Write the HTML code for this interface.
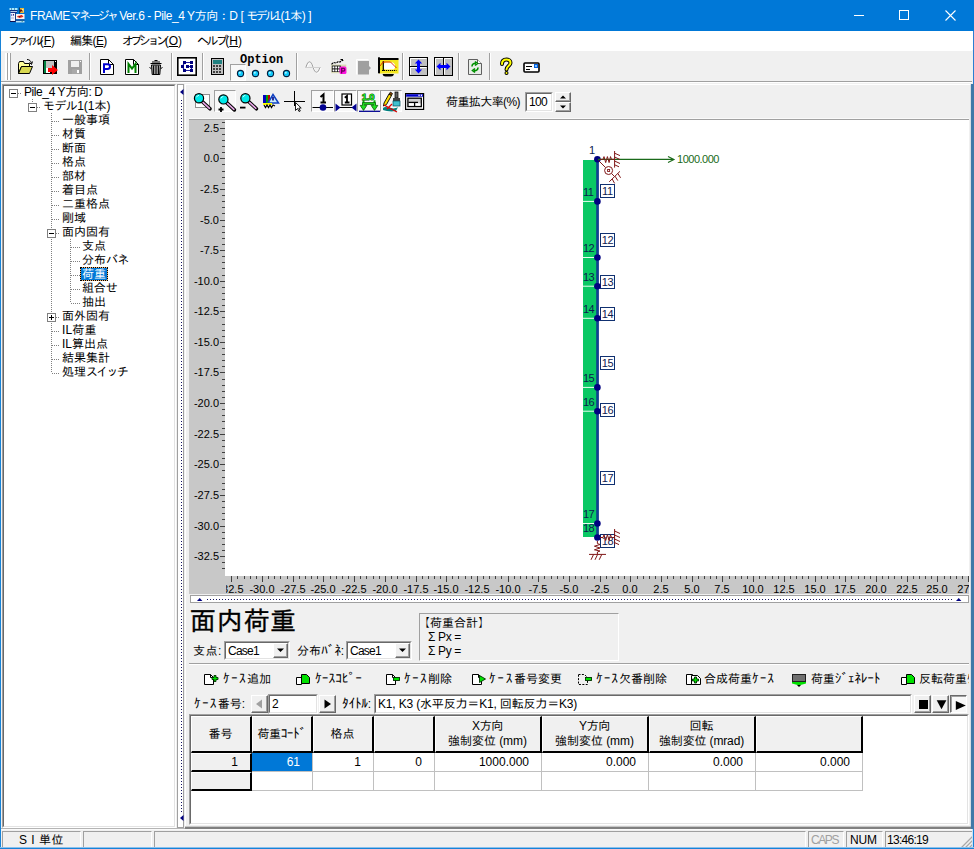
<!DOCTYPE html>
<html lang="ja"><head><meta charset="utf-8"><title>FRAMEマネージャ Ver.6</title>
<style>
html,body{margin:0;padding:0}
body{width:974px;height:849px;position:relative;overflow:hidden;background:#f0f0f0;
 font-family:"Liberation Sans","IPAGothic",sans-serif;font-size:12px;color:#000;line-height:1}
.a{position:absolute}
.t{position:absolute;white-space:nowrap;line-height:14px;height:14px}
svg{position:absolute;overflow:visible}
.sunk{position:absolute;box-sizing:border-box;border:1px solid;border-color:#a0a0a0 #fff #fff #a0a0a0}
.sunk2{position:absolute;box-sizing:border-box;border:1px solid;border-color:#696969 #e3e3e3 #e3e3e3 #696969}
.btn{position:absolute;box-sizing:border-box;background:#f0f0f0;border:1px solid;border-color:#fff #696969 #696969 #fff;box-shadow:inset -1px -1px 0 #a0a0a0}
.vsep{position:absolute;width:1px;background:#a0a0a0;box-shadow:1px 0 0 #fff}
.rl{position:absolute;font-size:11px;line-height:12px;height:12px;color:#000;white-space:nowrap}
.tree .t{font-size:12px}
.h{font-size:13.5px;line-height:12px}
.gh{position:absolute;box-sizing:border-box;background:#f0f0f0;border-right:2px solid #000;border-bottom:2px solid #000;border-top:1px solid #fff;border-left:1px solid #fff;text-align:center;font-size:12px;line-height:16px}
.gc{position:absolute;box-sizing:border-box;background:#fff;border-right:1px solid #c0c0c0;border-bottom:1px solid #c0c0c0;text-align:right;font-size:12px;line-height:18px;padding-right:12px}
</style></head><body>

<div class="a" style="left:0;top:0;width:974px;height:31px;background:#0078d7"></div>
<svg style="left:9px;top:7px" width="17" height="16" viewBox="0 0 17 16">
<rect x="0.5" y="1" width="8" height="2" fill="#a8ecff"></rect><rect x="2" y="1.5" width="1" height="1" fill="#104080"></rect><rect x="5" y="1.5" width="1" height="1" fill="#104080"></rect>
<rect x="1" y="3.3" width="7.5" height="1" fill="#101060"></rect><rect x="1.5" y="4.3" width="6.5" height="0.8" fill="#fff"></rect><rect x="1.5" y="5.1" width="6.5" height="0.8" fill="#202070"></rect>
<rect x="1.5" y="6" width="4.5" height="8" fill="#f4f4fc"></rect><rect x="2.2" y="7" width="1" height="2" fill="#6060c0"></rect><rect x="4" y="7" width="1" height="1.6" fill="#303080"></rect><rect x="2" y="10" width="3" height="2" fill="#d0d0e8"></rect>
<rect x="1" y="14" width="5.5" height="1" fill="#101050"></rect><rect x="6" y="6" width="0.8" height="9" fill="#203070"></rect>
<rect x="11" y="1" width="4" height="5" fill="#e8b838"></rect><rect x="12.5" y="2" width="2" height="3" fill="#fff0a0"></rect><path d="M10.5 5.5 L12 3 L13.5 4.5" stroke="#601000" stroke-width="1.2" fill="none"></path><rect x="10" y="0.5" width="1" height="6" fill="#104060"></rect>
<rect x="7" y="7" width="8.5" height="5.2" fill="#fff4f0"></rect><path d="M8 10 C9 7.5 10 9.5 11 8.5 C12 7.5 13.5 8 14.5 9.5 C13 11 9.5 11 8 10Z" fill="#e03020"></path><rect x="10" y="9" width="1.5" height="1.5" fill="#901010"></rect>
<rect x="7" y="12.2" width="8.5" height="1.8" fill="#1a5aa8"></rect><rect x="7" y="14" width="8.5" height="1.5" fill="#b8e0f4"></rect><rect x="12.5" y="13.6" width="1.5" height="1" fill="#208080"></rect>
</svg>
<div class="t" style="left: 30px; top: 8px; color: rgb(255, 255, 255); font-size: 12px; line-height: 16px; height: 16px; letter-spacing: -0.44px;">FRAME<span class="k" style="letter-spacing: -2.7px;">マネージャ</span> Ver.6 - Pile_4 Y方向：D [ <span class="k" style="letter-spacing: -2.7px;">モデル</span>1(1本) ]</div>
<svg style="left:840px;top:0" width="134" height="31" viewBox="0 0 134 31">
<rect x="14" y="15" width="10" height="1" fill="#fff"></rect>
<rect x="59.5" y="10.5" width="9" height="9" fill="none" stroke="#fff" stroke-width="1"></rect>
<path d="M105.5 10.5 L115.5 20.5 M115.5 10.5 L105.5 20.5" stroke="#fff" stroke-width="1.1" fill="none"></path>
</svg>
<div class="a" style="left:1px;top:31px;width:972px;height:19px;background:#fff"></div>
<div class="t" style="left:8px;top:34px"><span class="k" style="letter-spacing: -4.09px;">ファイル</span>(<u>F</u>)</div>
<div class="t" style="left: 70px; top: 34px; letter-spacing: -0.7px;">編集(<u>E</u>)</div>
<div class="t" style="left:122px;top:34px"><span class="k" style="letter-spacing: -3.47px;">オプション</span>(<u>O</u>)</div>
<div class="t" style="left:197px;top:34px"><span class="k" style="letter-spacing: -2.56px;">ヘルプ</span>(<u>H</u>)</div>
<div class="a" style="left:1px;top:50px;width:971px;height:1px;background:#fff"></div>
<div class="a" style="left:1px;top:81px;width:971px;height:1px;background:#a0a0a0"></div>
<div class="a" style="left:1px;top:82px;width:971px;height:1px;background:#fff"></div>
<div class="a" style="left:5px;top:53px;width:2px;height:27px;background:#fff;box-shadow:2px 0 0 -0px #a0a0a0"></div><div class="a" style="left:7px;top:53px;width:1px;height:27px;background:#a0a0a0"></div><div class="a" style="left:8px;top:53px;width:2px;height:27px;background:#fff"></div><div class="a" style="left:10px;top:53px;width:1px;height:27px;background:#a0a0a0"></div>
<div class="vsep" style="left:89px;top:53px;height:27px"></div>
<div class="vsep" style="left:171px;top:53px;height:27px"></div>
<div class="vsep" style="left:202px;top:53px;height:27px"></div>
<div class="vsep" style="left:296px;top:53px;height:27px"></div>
<div class="vsep" style="left:402px;top:53px;height:27px"></div>
<div class="vsep" style="left:458px;top:53px;height:27px"></div>
<div class="vsep" style="left:489px;top:53px;height:27px"></div>
<svg style="left:17px;top:58px" width="17" height="17" viewBox="0 0 17 17"><path d="M1.5 5.5 L2.5 3.5 H6.5 L7.5 5.5 H12.5 V8.5 H4.5 L1.5 15.5 Z" fill="#ffff99" stroke="#000"></path><path d="M4.5 8.5 H15.5 L12.5 15.5 H1.5 Z" fill="#d8d850" stroke="#000"></path><path d="M10 1.5 C12.5 1.5 14 3 14.5 5.5 M12.5 4.5 L14.5 6.5 L15.5 3.5" fill="none" stroke="#000"></path></svg>
<svg style="left:43px;top:60px" width="16" height="15" viewBox="0 0 16 15"><rect x="0" y="0" width="14" height="14" fill="#000"></rect><rect x="1" y="1" width="2" height="12" fill="#008040"></rect><rect x="3" y="1" width="8" height="7" fill="#c0c0c0"></rect><rect x="12" y="1" width="1" height="1" fill="#fff"></rect><rect x="3" y="8" width="4" height="5" fill="#fff"></rect><path d="M5 8 H9 V5 L15 10 L9 15 V12 H5 Z" fill="#ff0000"></path></svg>
<svg style="left:68px;top:60px" width="15" height="15" viewBox="0 0 15 15" shape-rendering="crispEdges"><rect x="0" y="0" width="14" height="14" fill="#a0a0a0"></rect><rect x="3" y="1" width="8" height="6" fill="#f0f0f0"></rect><rect x="12" y="1" width="1" height="1" fill="#fff"></rect><rect x="4" y="9" width="7" height="5" fill="#a8a8a8"></rect><rect x="9" y="10" width="2" height="3" fill="#fff"></rect></svg>
<svg style="left:100px;top:59px" width="14" height="17" viewBox="0 0 14 17"><path d="M0.5 0.5 H8.5 L13.5 5.5 V15.5 H0.5 Z" fill="#fff" stroke="#000"></path><path d="M8.5 0.5 V5.5 H13.5" fill="none" stroke="#000"></path><path d="M4 14 V5.2 H7.5 Q10 5.2 10 7.6 Q10 10 7.5 10 H4" fill="none" stroke="#0000d0" stroke-width="2"></path></svg>
<svg style="left:125px;top:59px" width="14" height="17" viewBox="0 0 14 17"><path d="M0.5 0.5 H8.5 L13.5 5.5 V15.5 H0.5 Z" fill="#fff" stroke="#000"></path><path d="M8.5 0.5 V5.5 H13.5" fill="none" stroke="#000"></path><path d="M3.5 14 V5 L7 9.5 L10.5 5 V14" fill="none" stroke="#008000" stroke-width="2"></path></svg>
<svg style="left:149px;top:59px" width="14" height="17" viewBox="0 0 14 17"><path d="M5.5 1.5 H8.5 M3 3 H11 M1.5 4.5 H12.5" stroke="#000" stroke-width="1.2" fill="none"></path><path d="M2.5 6 H11.5 L10.8 15.5 H3.2 Z" fill="#b0b0b0" stroke="#000"></path><path d="M4.6 6.5 V15 M7 6.5 V15 M9.4 6.5 V15" stroke="#000" stroke-width="1.1" fill="none"></path><path d="M0.5 8.5 L2.3 9.6 M13.5 8.5 L11.7 9.6" stroke="#000"></path></svg>
<svg style="left:177px;top:57px" width="20" height="19" viewBox="0 0 20 19"><rect x="0.8" y="0.8" width="18.4" height="17.4" fill="#fff" stroke="#000" stroke-width="1.6"></rect><path d="M14.5 5.5 H7.5 L5.5 9.5 L7.5 13.5 H14.5 V9.5 H10.5" fill="none" stroke="#2020a0" stroke-width="1.2"></path><g fill="#000080"><rect x="6" y="4" width="3" height="3"></rect><rect x="13" y="4" width="3" height="3"></rect><rect x="4" y="8" width="3" height="3"></rect><rect x="6" y="12" width="3" height="3"></rect><rect x="13" y="12" width="3" height="3"></rect><rect x="13" y="8" width="3" height="3"></rect><rect x="9" y="8" width="3" height="3"></rect></g></svg>
<svg style="left:211px;top:58px" width="14" height="18" viewBox="0 0 14 18" shape-rendering="crispEdges"><rect x="0.5" y="0.5" width="12" height="16" fill="#c0c0c0" stroke="#000"></rect><rect x="2" y="2" width="9" height="4" fill="#208080"></rect><g fill="#404040"><rect x="2" y="7" width="2" height="2"></rect><rect x="5" y="7" width="2" height="2"></rect><rect x="8" y="7" width="2" height="2"></rect><rect x="2" y="10" width="2" height="2"></rect><rect x="5" y="10" width="2" height="2"></rect><rect x="8" y="10" width="2" height="2"></rect><rect x="2" y="13" width="2" height="2"></rect><rect x="5" y="13" width="2" height="2"></rect><rect x="8" y="13" width="2" height="2"></rect></g></svg>
<div class="t" style="left:240px;top:53px;font-family:'Liberation Mono',monospace;font-weight:bold;font-size:12px;letter-spacing:0">Option</div>
<div class="a" style="left:230px;top:64px;width:16px;height:17px;box-sizing:border-box;border:1px solid;border-color:#a0a0a0 #fff #fff #a0a0a0;background:#f8f8f8"></div>
<svg style="left:236px;top:69px" width="9" height="9" viewBox="0 0 9 9"><circle cx="4.5" cy="4.5" r="3.1" fill="#10c8f8" stroke="#002040" stroke-width="1.1"></circle><circle cx="3.8" cy="3.8" r="1" fill="#b0f4ff"></circle></svg>
<svg style="left:251px;top:69px" width="9" height="9" viewBox="0 0 9 9"><circle cx="4.5" cy="4.5" r="3.1" fill="#10c8f8" stroke="#002040" stroke-width="1.1"></circle><circle cx="3.8" cy="3.8" r="1" fill="#b0f4ff"></circle></svg>
<svg style="left:266px;top:69px" width="9" height="9" viewBox="0 0 9 9"><circle cx="4.5" cy="4.5" r="3.1" fill="#10c8f8" stroke="#002040" stroke-width="1.1"></circle><circle cx="3.8" cy="3.8" r="1" fill="#b0f4ff"></circle></svg>
<svg style="left:282px;top:69px" width="9" height="9" viewBox="0 0 9 9"><circle cx="4.5" cy="4.5" r="3.1" fill="#10c8f8" stroke="#002040" stroke-width="1.1"></circle><circle cx="3.8" cy="3.8" r="1" fill="#b0f4ff"></circle></svg>
<svg style="left:305px;top:60px" width="16" height="13" viewBox="0 0 16 13"><path d="M1 7 C3 0 6 0 8 7 C10 14 13 14 15 7" fill="none" stroke="#fff" stroke-width="1" transform="translate(1,1)"></path><path d="M1 7 C3 0 6 0 8 7 C10 14 13 14 15 7" fill="none" stroke="#a0a0a0" stroke-width="1"></path><path d="M0 7.5 H16" stroke="#d0d0d0"></path></svg>
<svg style="left:331px;top:59px" width="16" height="16" viewBox="0 0 16 16"><path d="M0.5 5.5 L2.5 3.5 L5 4 L7.5 2.5 L9 3 L11 1 L12.5 2" stroke="#000" stroke-width="1.2" fill="none" stroke-dasharray="2.2 0.8"></path><path d="M9.5 0.5 H12" stroke="#000"></path><rect x="0.3" y="5.6" width="15" height="8.6" fill="#d8d8b4"></rect><rect x="0.8" y="6.6" width="9" height="6.4" fill="#101010"></rect><g fill="#fff"><rect x="1.6" y="7.4" width="1.8" height="2"></rect><rect x="4.2" y="7.4" width="1.8" height="2"></rect><rect x="6.8" y="7.4" width="1.8" height="2"></rect><rect x="1.6" y="10.4" width="1.8" height="2"></rect><rect x="4.2" y="10.4" width="1.8" height="2"></rect><rect x="6.8" y="10.4" width="1.8" height="2"></rect></g><rect x="8.6" y="7.6" width="6.8" height="7.4" rx="1.5" fill="#ff10e0"></rect><path d="M10.6 14.4 V9.4 H12.6 Q13.8 9.4 13.8 10.7 Q13.8 12 12.6 12 H10.6" fill="none" stroke="#700060" stroke-width="1.3"></path></svg>
<svg style="left:356px;top:59px" width="16" height="16" viewBox="0 0 16 16"><path d="M0.5 15.5 V0.5 H12.5" fill="none" stroke="#fff" stroke-width="1"></path><path d="M2 2 H13 V7 L15 9 L13 11 V15.5 H2 Z" fill="#a0a0a0"></path></svg>
<svg style="left:377px;top:57px" width="22" height="20" viewBox="0 0 22 20"><rect x="2" y="2" width="19.5" height="14.5" fill="#f4e820"></rect><rect x="1" y="1" width="20.5" height="2" fill="#000"></rect><rect x="1" y="0.3" width="2" height="16" fill="#000"></rect><path d="M7 6.5 L8.5 5.5 H16 L18 7.5 V11 L16.5 12.5 H8 L7 11.5 Z" fill="#fff"></path><path d="M6.3 4 V14" stroke="#000" stroke-width="1.2"></path><path d="M5 13.5 H19.5" stroke="#000" stroke-width="1.2" stroke-dasharray="1.2 0.8"></path><path d="M3 9 L6 5 H13.5 L19.5 11" fill="none" stroke="#e02000" stroke-width="0.9"></path><path d="M5.5 17 H17 Q16.5 19.5 14 19.5 H8.5 Q6 19.5 5.5 17 Z" fill="#000"></path></svg>
<svg style="left:409px;top:57px" width="19" height="19" viewBox="0 0 19 19"><rect x="0.5" y="0.5" width="18" height="18" fill="#c0c0c0" stroke="#000" stroke-width="1"></rect><path d="M1.5 9 V1.5 H17.5 M1.5 17.5 V10.5 H17.5" stroke="#fff" stroke-width="1" fill="none"></path><rect x="1" y="9" width="17" height="1" fill="#000"></rect><path d="M9.5 2.5 L13.2 6.5 H11 V12.5 H13.2 L9.5 16.5 L5.8 12.5 H8 V6.5 H5.8 Z" fill="#0000ff"></path></svg>
<svg style="left:434px;top:57px" width="19" height="19" viewBox="0 0 19 19"><rect x="0.5" y="0.5" width="18" height="18" fill="#c0c0c0" stroke="#000" stroke-width="1"></rect><path d="M1.5 17.5 V1.5 H9 M10.5 17.5 V1.5 H17.5" stroke="#fff" stroke-width="1" fill="none"></path><rect x="9" y="1" width="1" height="17" fill="#000"></rect><path d="M2.5 9.5 L6.5 5.8 V8 H12.5 V5.8 L16.5 9.5 L12.5 13.2 V11 H6.5 V13.2 Z" fill="#0000ff"></path></svg>
<svg style="left:468px;top:59px" width="14" height="16" viewBox="0 0 14 16"><path d="M0.5 0.5 H9.5 L13.5 4.5 V15.5 H0.5 Z" fill="#e8ece8" stroke="#606060"></path><path d="M9.5 0.5 V4.5 H13.5" fill="#fff" stroke="#606060"></path><path d="M4 7.5 C4 5 6 4 8 4.5 M7 2.5 L9.5 4.5 L7 6.5" fill="none" stroke="#009000" stroke-width="1.6"></path><path d="M10 8.5 C10 11 8 12 6 11.5 M7 9.5 L4.5 11.5 L7 13.5" fill="none" stroke="#009000" stroke-width="1.6"></path></svg>
<svg style="left:499px;top:58px" width="14" height="18" viewBox="0 0 14 18"><path d="M3 6 C3 2 6 1.5 7.5 1.5 C10 1.5 11.5 3 11.5 5 C11.5 7.5 7.5 8 7.5 11.5" fill="none" stroke="#000" stroke-width="4" stroke-linecap="round"></path><circle cx="7.5" cy="15" r="2" fill="#000"></circle><path d="M3 6 C3 2 6 1.5 7.5 1.5 C10 1.5 11.5 3 11.5 5 C11.5 7.5 7.5 8 7.5 11.5" fill="none" stroke="#ffff00" stroke-width="2" stroke-linecap="round"></path><circle cx="7.5" cy="15" r="1" fill="#ffff00"></circle></svg>
<svg style="left:523px;top:62px" width="17" height="12" viewBox="0 0 17 12"><rect x="1" y="1" width="15" height="9" rx="1" fill="#fff" stroke="#000" stroke-width="1.6"></rect><path d="M3 4.5 H9 M3 7.5 H7" stroke="#000" stroke-width="1.2"></path><rect x="11" y="2" width="4" height="4" fill="#0060e0"></rect><rect x="12" y="3" width="2" height="2" fill="#80c0ff"></rect></svg>
<div class="sunk" style="left:2px;top:84px;width:174px;height:744px"></div>
<div class="sunk2" style="left:3px;top:85px;width:172px;height:742px;background:#fff"></div>
<div class="tree">
<div class="a" style="left:32px;top:99px;width:1px;height:4px;background-image:repeating-linear-gradient(180deg,#808080 0 1px,transparent 1px 2px)"></div>
<div class="a" style="left:51px;top:113px;width:1px;height:260px;background-image:repeating-linear-gradient(180deg,#808080 0 1px,transparent 1px 2px)"></div>
<div class="a" style="left:70px;top:239px;width:1px;height:64px;background-image:repeating-linear-gradient(180deg,#808080 0 1px,transparent 1px 2px)"></div>
<div class="a" style="left:18px;top:93px;width:4px;height:1px;background-image:repeating-linear-gradient(90deg,#808080 0 1px,transparent 1px 2px)"></div>
<div class="a" style="left:9px;top:89px;width:9px;height:9px;box-sizing:border-box;border:1px solid #808080;background:#fff"></div>
<div class="a" style="left:11px;top:93px;width:5px;height:1px;background:#000"></div>
<div class="t" style="left: 24px; top: 85px; letter-spacing: -0.41px;">Pile_4 Y方向: D</div>
<div class="a" style="left:37px;top:107px;width:4px;height:1px;background-image:repeating-linear-gradient(90deg,#808080 0 1px,transparent 1px 2px)"></div>
<div class="a" style="left:28px;top:103px;width:9px;height:9px;box-sizing:border-box;border:1px solid #808080;background:#fff"></div>
<div class="a" style="left:30px;top:107px;width:5px;height:1px;background:#000"></div>
<div class="t" style="left:43px;top:99px"><span class="k" style="letter-spacing: -0.61px;">モデル</span>1(1本)</div>
<div class="a" style="left:52px;top:121px;width:8px;height:1px;background-image:repeating-linear-gradient(90deg,#808080 0 1px,transparent 1px 2px)"></div>
<div class="t" style="left:62px;top:113px">一般事項</div>
<div class="a" style="left:52px;top:135px;width:8px;height:1px;background-image:repeating-linear-gradient(90deg,#808080 0 1px,transparent 1px 2px)"></div>
<div class="t" style="left:62px;top:127px">材質</div>
<div class="a" style="left:52px;top:149px;width:8px;height:1px;background-image:repeating-linear-gradient(90deg,#808080 0 1px,transparent 1px 2px)"></div>
<div class="t" style="left:62px;top:141px">断面</div>
<div class="a" style="left:52px;top:163px;width:8px;height:1px;background-image:repeating-linear-gradient(90deg,#808080 0 1px,transparent 1px 2px)"></div>
<div class="t" style="left:62px;top:155px">格点</div>
<div class="a" style="left:52px;top:177px;width:8px;height:1px;background-image:repeating-linear-gradient(90deg,#808080 0 1px,transparent 1px 2px)"></div>
<div class="t" style="left:62px;top:169px">部材</div>
<div class="a" style="left:52px;top:191px;width:8px;height:1px;background-image:repeating-linear-gradient(90deg,#808080 0 1px,transparent 1px 2px)"></div>
<div class="t" style="left:62px;top:183px">着目点</div>
<div class="a" style="left:52px;top:205px;width:8px;height:1px;background-image:repeating-linear-gradient(90deg,#808080 0 1px,transparent 1px 2px)"></div>
<div class="t" style="left:62px;top:197px">二重格点</div>
<div class="a" style="left:52px;top:219px;width:8px;height:1px;background-image:repeating-linear-gradient(90deg,#808080 0 1px,transparent 1px 2px)"></div>
<div class="t" style="left:62px;top:211px">剛域</div>
<div class="a" style="left:56px;top:233px;width:4px;height:1px;background-image:repeating-linear-gradient(90deg,#808080 0 1px,transparent 1px 2px)"></div>
<div class="a" style="left:47px;top:229px;width:9px;height:9px;box-sizing:border-box;border:1px solid #808080;background:#fff"></div>
<div class="a" style="left:49px;top:233px;width:5px;height:1px;background:#000"></div>
<div class="t" style="left:62px;top:225px">面内固有</div>
<div class="a" style="left:71px;top:247px;width:9px;height:1px;background-image:repeating-linear-gradient(90deg,#808080 0 1px,transparent 1px 2px)"></div>
<div class="t" style="left:82px;top:239px">支点</div>
<div class="a" style="left:71px;top:261px;width:9px;height:1px;background-image:repeating-linear-gradient(90deg,#808080 0 1px,transparent 1px 2px)"></div>
<div class="t" style="left:82px;top:253px">分布<span class="k" style="letter-spacing: -0.75px;">バネ</span></div>
<div class="a" style="left:71px;top:275px;width:9px;height:1px;background-image:repeating-linear-gradient(90deg,#808080 0 1px,transparent 1px 2px)"></div>
<div class="a" style="left:80px;top:267px;width:28px;height:14px;background:#0078d7;box-shadow:inset 0 0 0 1px #f0b070;outline:1px dotted #000;outline-offset:-1px"></div>
<div class="t" style="left:82px;top:267px;color:#fff">荷重</div>
<div class="a" style="left:71px;top:289px;width:9px;height:1px;background-image:repeating-linear-gradient(90deg,#808080 0 1px,transparent 1px 2px)"></div>
<div class="t" style="left: 82px; top: 281px; letter-spacing: -0.17px;">組合せ</div>
<div class="a" style="left:71px;top:303px;width:9px;height:1px;background-image:repeating-linear-gradient(90deg,#808080 0 1px,transparent 1px 2px)"></div>
<div class="t" style="left:82px;top:295px">抽出</div>
<div class="a" style="left:56px;top:317px;width:4px;height:1px;background-image:repeating-linear-gradient(90deg,#808080 0 1px,transparent 1px 2px)"></div>
<div class="a" style="left:47px;top:313px;width:9px;height:9px;box-sizing:border-box;border:1px solid #808080;background:#fff"></div>
<div class="a" style="left:49px;top:317px;width:5px;height:1px;background:#000"></div>
<div class="a" style="left:51px;top:315px;width:1px;height:5px;background:#000"></div>
<div class="t" style="left:62px;top:309px">面外固有</div>
<div class="a" style="left:52px;top:331px;width:8px;height:1px;background-image:repeating-linear-gradient(90deg,#808080 0 1px,transparent 1px 2px)"></div>
<div class="t" style="left: 62px; top: 323px; letter-spacing: 0.15px;">IL荷重</div>
<div class="a" style="left:52px;top:345px;width:8px;height:1px;background-image:repeating-linear-gradient(90deg,#808080 0 1px,transparent 1px 2px)"></div>
<div class="t" style="left:62px;top:337px">IL算出点</div>
<div class="a" style="left:52px;top:359px;width:8px;height:1px;background-image:repeating-linear-gradient(90deg,#808080 0 1px,transparent 1px 2px)"></div>
<div class="t" style="left:62px;top:351px">結果集計</div>
<div class="a" style="left:52px;top:373px;width:8px;height:1px;background-image:repeating-linear-gradient(90deg,#808080 0 1px,transparent 1px 2px)"></div>
<div class="t" style="left:62px;top:365px">処理<span class="k" style="letter-spacing: -1.75px;">スイッチ</span></div>
</div>
<div class="a" style="left:177px;top:84px;width:7px;height:744px;box-sizing:border-box;border:1px solid #a0a0a0;background:#fff"></div>
<div class="a" style="left:181px;top:100px;width:1px;height:713px;background-image:repeating-linear-gradient(180deg,#101060 0 1px,transparent 1px 3px)"></div>
<svg style="left:179px;top:89px" width="6" height="7"><path d="M4.5 0 V6 L1 3 Z" fill="#000080"></path></svg>
<svg style="left:179px;top:815px" width="6" height="7"><path d="M4.5 0 V6 L1 3 Z" fill="#000080"></path></svg>
<div class="a" style="left:185px;top:84px;width:786px;height:1px;background:#fff"></div>
<div class="a" style="left:185px;top:84px;width:1px;height:743px;background:#fff"></div>
<div class="a" style="left:189px;top:118px;width:780px;height:1px;background:#fafafa"></div>
<div class="a" style="left:189px;top:119px;width:780px;height:1px;background:#a0a0a0"></div>
<svg style="left:193px;top:90px" width="20" height="22" viewBox="0 0 20 22"><rect x="2.5" y="4.5" width="14" height="13" fill="#fff" stroke="#909090"></rect><path d="M9.5 11.8 L17 18.8" stroke="#000" stroke-width="3.6" stroke-linecap="round"></path><path d="M10 12.3 L16.5 18.3" stroke="#e8a8e8" stroke-width="1.6" stroke-linecap="round"></path><circle cx="6" cy="8.3" r="4.6" fill="#00e8e8" stroke="#000" stroke-width="1.2"></circle><path d="M3.5 7.300000000000001 A3 3 0 0 1 6 5.300000000000001" stroke="#c0ffff" stroke-width="1" fill="none"></path></svg>
<div class="a" style="left:214px;top:90px;width:22px;height:22px;box-sizing:border-box;background:#f8f8f8;border:1px solid;border-color:#a0a0a0 #fff #fff #a0a0a0"></div>
<svg style="left:214px;top:90px" width="22" height="22" viewBox="0 0 22 22"><path d="M12.9 12.9 L20.4 19.9" stroke="#000" stroke-width="3.6" stroke-linecap="round"></path><path d="M13.4 13.4 L19.9 19.4" stroke="#e8a8e8" stroke-width="1.6" stroke-linecap="round"></path><circle cx="9.4" cy="9.4" r="4.6" fill="#00e8e8" stroke="#000" stroke-width="1.2"></circle><path d="M6.9 8.4 A3 3 0 0 1 9.4 6.4" stroke="#c0ffff" stroke-width="1" fill="none"></path><path d="M4.5 19.5 H9.5 M7 17 V22" stroke="#000" stroke-width="1.8"></path></svg>
<svg style="left:238px;top:90px" width="20" height="22" viewBox="0 0 20 22"><path d="M10.9 11.8 L18.4 18.8" stroke="#000" stroke-width="3.6" stroke-linecap="round"></path><path d="M11.4 12.3 L17.9 18.3" stroke="#e8a8e8" stroke-width="1.6" stroke-linecap="round"></path><circle cx="7.4" cy="8.3" r="4.6" fill="#00e8e8" stroke="#000" stroke-width="1.2"></circle><path d="M4.9 7.300000000000001 A3 3 0 0 1 7.4 5.300000000000001" stroke="#c0ffff" stroke-width="1" fill="none"></path><path d="M2 17.6 H7.5" stroke="#000" stroke-width="1.8"></path></svg>
<svg style="left:263px;top:94px" width="17" height="15" viewBox="0 0 17 15"><rect x="0" y="1" width="3" height="8" fill="#0000c0"></rect><rect x="3" y="1" width="2" height="8" fill="#00a000"></rect><rect x="5" y="1" width="2" height="8" fill="#c00000"></rect><path d="M5 9 L10 0.5 L15.5 9 Z" fill="#c8ecff" stroke="#1040c0" stroke-width="1.5"></path><path d="M10 3 V6.5" stroke="#000080" stroke-width="1.6"></path><rect x="0" y="9" width="9" height="2" fill="#ffff00"></rect><path d="M1 11 L2.5 13.5 L4 11 L5.5 13.5 L7 11 L8.5 13.5 L10 11 L12 12" fill="none" stroke="#000" stroke-width="1.2"></path></svg>
<svg style="left:284px;top:90px" width="22" height="22" viewBox="0 0 22 22"><path d="M0 11.5 H21 M10.5 1 V16" stroke="#000" stroke-width="1"></path><path d="M11.5 12.5 V20.5 L13.5 18.5 L15 21.5 L16.3 21 L14.8 18 H17.2 Z" fill="#fff" stroke="#000" stroke-width="0.9"></path></svg>
<div class="a" style="left:311px;top:90px;width:23px;height:22px;box-sizing:border-box;background:#f8f8f8;border:1px solid;border-color:#a0a0a0 #fff #fff #a0a0a0"></div>
<svg style="left:311px;top:90px" width="23" height="22" viewBox="0 0 23 22"><path d="M1.5 17.5 H22" stroke="#000" stroke-width="1"></path><circle cx="12" cy="17.5" r="3.3" fill="#000090"></circle><path d="M9.5 7 L12.5 4.5 V12.5 M9.5 12.5 H15" stroke="#000" stroke-width="2" fill="none"></path></svg>
<div class="a" style="left:334px;top:90px;width:23px;height:22px;box-sizing:border-box;background:#f8f8f8;border:1px solid;border-color:#a0a0a0 #fff #fff #a0a0a0"></div>
<svg style="left:334px;top:90px" width="23" height="22" viewBox="0 0 23 22"><path d="M3 17.5 H21" stroke="#000" stroke-width="1"></path><path d="M1.5 13.5 L6.5 17.5 L1.5 21.5 Z M22.5 13.5 L17.5 17.5 L22.5 21.5 Z" fill="#000090"></path><rect x="8" y="4" width="9.5" height="11" fill="#fff" stroke="#000" stroke-width="1.2"></rect><path d="M10.8 7.8 L13 6 V12.5 M10.8 12.5 H15.5" stroke="#000" stroke-width="1.8" fill="none"></path></svg>
<div class="a" style="left:357px;top:90px;width:23px;height:22px;box-sizing:border-box;background:#f8f8f8;border:1px solid;border-color:#a0a0a0 #fff #fff #a0a0a0"></div>
<svg style="left:357px;top:90px" width="23" height="22" viewBox="0 0 23 22"><path d="M2 21.3 H23" stroke="#000090" stroke-width="1.3"></path><path d="M6.5 10.3 V13 M17.5 10.3 V13" stroke="#10b010" stroke-width="2"></path><path d="M5.5 12.6 H18.5 V15.4 H20.8 L17.5 20.4 L14.2 15.4 H16.5 V14.4 H7.5 V15.4 H9.8 L6.5 20.4 L3.2 15.4 H5.5 Z" fill="#20e020" stroke="#006000" stroke-width="0.8"></path><text x="4.8" y="9.9" font-family="Liberation Sans,sans-serif" font-weight="bold" font-size="9.5" fill="#20e020" stroke="#005000" stroke-width="0.9" paint-order="stroke" letter-spacing="-0.2">1.0</text></svg>
<div class="a" style="left:380px;top:90px;width:22px;height:22px;box-sizing:border-box;background:#f8f8f8;border:1px solid;border-color:#a0a0a0 #fff #fff #a0a0a0"></div>
<svg style="left:380px;top:90px" width="22" height="22" viewBox="0 0 22 22"><path d="M4 13 L9 4 L11.5 5.5 L6.5 14.5 L3.5 16 Z" fill="#ffe000" stroke="#000" stroke-width="0.9"></path><path d="M9 4 L10.5 2 L12.5 3.5 L11.5 5.5 Z" fill="#804000" stroke="#000" stroke-width="0.7"></path><rect x="15" y="2" width="3" height="6" fill="#606060" stroke="#000" stroke-width="0.7"></rect><path d="M13 8 H20 V11 H13 Z" fill="#404040"></path><rect x="13" y="11" width="7" height="5" fill="#40c0d0" stroke="#005060" stroke-width="0.7"></rect><path d="M3 18 C7 15 12 21 18 17 L16 21 C11 22 6 21 3 20 Z" fill="#008080"></path><path d="M4 15 L17 22 M12 14 L7 19" stroke="#e00000" stroke-width="1.3"></path></svg>
<svg style="left:405px;top:93px" width="20" height="17" viewBox="0 0 20 17"><rect x="0.6" y="0.6" width="18" height="15.8" fill="#fff" stroke="#000" stroke-width="1.2"></rect><rect x="1.2" y="1.2" width="16.8" height="2.5" fill="#0000c8"></rect><rect x="13.4" y="1.6" width="1.3" height="1.5" fill="#fff"></rect><rect x="15.8" y="1.6" width="1.3" height="1.5" fill="#fff"></rect><rect x="2.9" y="5.2" width="13.4" height="8.4" fill="#d0d0d0" stroke="#000" stroke-width="1.3"></rect><path d="M3.5 9.4 H13 M9.6 9.4 V13" stroke="#000" stroke-width="1.3"></path><rect x="4" y="10.4" width="4.8" height="2.2" fill="#fff"></rect><rect x="10.6" y="10.4" width="4.8" height="2.2" fill="#fff"></rect></svg>
<div class="t" style="left: 446px; top: 95px; letter-spacing: -0.58px;">荷重拡大率(%)</div>
<div class="sunk" style="left:525px;top:92px;width:28px;height:20px"></div>
<div class="sunk2" style="left:526px;top:93px;width:26px;height:18px;background:#fff"></div>
<div class="t" style="left: 529px; top: 95px; letter-spacing: -0.68px;">100</div>
<div class="btn" style="left:555px;top:92px;width:16px;height:10px"></div>
<div class="btn" style="left:555px;top:102px;width:16px;height:10px"></div>
<svg style="left:555px;top:92px" width="16" height="20"><path d="M5 6.5 L8 3.5 L11 6.5 Z M5 13.5 L8 16.5 L11 13.5 Z" fill="#000"></path></svg>
<div class="a" style="left:189px;top:120px;width:780px;height:474px;background:#c8c8c8"></div>
<div class="a" style="left:225px;top:120px;width:744px;height:456px;background:#fff"></div>
<svg style="left:0;top:0" width="974" height="849" viewBox="0 0 974 849" shape-rendering="crispEdges"><rect x="222" y="568" width="3" height="1" fill="#404040"></rect><rect x="222" y="562" width="3" height="1" fill="#404040"></rect><rect x="220" y="556" width="5" height="1" fill="#404040"></rect><rect x="222" y="550" width="3" height="1" fill="#404040"></rect><rect x="222" y="544" width="3" height="1" fill="#404040"></rect><rect x="222" y="538" width="3" height="1" fill="#404040"></rect><rect x="222" y="532" width="3" height="1" fill="#404040"></rect><rect x="220" y="526" width="5" height="1" fill="#404040"></rect><rect x="222" y="519" width="3" height="1" fill="#404040"></rect><rect x="222" y="513" width="3" height="1" fill="#404040"></rect><rect x="222" y="507" width="3" height="1" fill="#404040"></rect><rect x="222" y="501" width="3" height="1" fill="#404040"></rect><rect x="220" y="495" width="5" height="1" fill="#404040"></rect><rect x="222" y="489" width="3" height="1" fill="#404040"></rect><rect x="222" y="483" width="3" height="1" fill="#404040"></rect><rect x="222" y="477" width="3" height="1" fill="#404040"></rect><rect x="222" y="470" width="3" height="1" fill="#404040"></rect><rect x="220" y="464" width="5" height="1" fill="#404040"></rect><rect x="222" y="458" width="3" height="1" fill="#404040"></rect><rect x="222" y="452" width="3" height="1" fill="#404040"></rect><rect x="222" y="446" width="3" height="1" fill="#404040"></rect><rect x="222" y="440" width="3" height="1" fill="#404040"></rect><rect x="220" y="434" width="5" height="1" fill="#404040"></rect><rect x="222" y="428" width="3" height="1" fill="#404040"></rect><rect x="222" y="421" width="3" height="1" fill="#404040"></rect><rect x="222" y="415" width="3" height="1" fill="#404040"></rect><rect x="222" y="409" width="3" height="1" fill="#404040"></rect><rect x="220" y="403" width="5" height="1" fill="#404040"></rect><rect x="222" y="397" width="3" height="1" fill="#404040"></rect><rect x="222" y="391" width="3" height="1" fill="#404040"></rect><rect x="222" y="385" width="3" height="1" fill="#404040"></rect><rect x="222" y="379" width="3" height="1" fill="#404040"></rect><rect x="220" y="372" width="5" height="1" fill="#404040"></rect><rect x="222" y="366" width="3" height="1" fill="#404040"></rect><rect x="222" y="360" width="3" height="1" fill="#404040"></rect><rect x="222" y="354" width="3" height="1" fill="#404040"></rect><rect x="222" y="348" width="3" height="1" fill="#404040"></rect><rect x="220" y="342" width="5" height="1" fill="#404040"></rect><rect x="222" y="336" width="3" height="1" fill="#404040"></rect><rect x="222" y="330" width="3" height="1" fill="#404040"></rect><rect x="222" y="324" width="3" height="1" fill="#404040"></rect><rect x="222" y="317" width="3" height="1" fill="#404040"></rect><rect x="220" y="311" width="5" height="1" fill="#404040"></rect><rect x="222" y="305" width="3" height="1" fill="#404040"></rect><rect x="222" y="299" width="3" height="1" fill="#404040"></rect><rect x="222" y="293" width="3" height="1" fill="#404040"></rect><rect x="222" y="287" width="3" height="1" fill="#404040"></rect><rect x="220" y="281" width="5" height="1" fill="#404040"></rect><rect x="222" y="275" width="3" height="1" fill="#404040"></rect><rect x="222" y="268" width="3" height="1" fill="#404040"></rect><rect x="222" y="262" width="3" height="1" fill="#404040"></rect><rect x="222" y="256" width="3" height="1" fill="#404040"></rect><rect x="220" y="250" width="5" height="1" fill="#404040"></rect><rect x="222" y="244" width="3" height="1" fill="#404040"></rect><rect x="222" y="238" width="3" height="1" fill="#404040"></rect><rect x="222" y="232" width="3" height="1" fill="#404040"></rect><rect x="222" y="226" width="3" height="1" fill="#404040"></rect><rect x="220" y="220" width="5" height="1" fill="#404040"></rect><rect x="222" y="213" width="3" height="1" fill="#404040"></rect><rect x="222" y="207" width="3" height="1" fill="#404040"></rect><rect x="222" y="201" width="3" height="1" fill="#404040"></rect><rect x="222" y="195" width="3" height="1" fill="#404040"></rect><rect x="220" y="189" width="5" height="1" fill="#404040"></rect><rect x="222" y="183" width="3" height="1" fill="#404040"></rect><rect x="222" y="177" width="3" height="1" fill="#404040"></rect><rect x="222" y="171" width="3" height="1" fill="#404040"></rect><rect x="222" y="164" width="3" height="1" fill="#404040"></rect><rect x="220" y="158" width="5" height="1" fill="#404040"></rect><rect x="222" y="152" width="3" height="1" fill="#404040"></rect><rect x="222" y="146" width="3" height="1" fill="#404040"></rect><rect x="222" y="140" width="3" height="1" fill="#404040"></rect><rect x="222" y="134" width="3" height="1" fill="#404040"></rect><rect x="220" y="128" width="5" height="1" fill="#404040"></rect><rect x="222" y="122" width="3" height="1" fill="#404040"></rect><rect x="231" y="576" width="1" height="6" fill="#404040"></rect><rect x="237" y="576" width="1" height="3" fill="#404040"></rect><rect x="244" y="576" width="1" height="3" fill="#404040"></rect><rect x="250" y="576" width="1" height="3" fill="#404040"></rect><rect x="256" y="576" width="1" height="3" fill="#404040"></rect><rect x="262" y="576" width="1" height="6" fill="#404040"></rect><rect x="268" y="576" width="1" height="3" fill="#404040"></rect><rect x="274" y="576" width="1" height="3" fill="#404040"></rect><rect x="280" y="576" width="1" height="3" fill="#404040"></rect><rect x="287" y="576" width="1" height="3" fill="#404040"></rect><rect x="293" y="576" width="1" height="6" fill="#404040"></rect><rect x="299" y="576" width="1" height="3" fill="#404040"></rect><rect x="305" y="576" width="1" height="3" fill="#404040"></rect><rect x="311" y="576" width="1" height="3" fill="#404040"></rect><rect x="317" y="576" width="1" height="3" fill="#404040"></rect><rect x="323" y="576" width="1" height="6" fill="#404040"></rect><rect x="330" y="576" width="1" height="3" fill="#404040"></rect><rect x="336" y="576" width="1" height="3" fill="#404040"></rect><rect x="342" y="576" width="1" height="3" fill="#404040"></rect><rect x="348" y="576" width="1" height="3" fill="#404040"></rect><rect x="354" y="576" width="1" height="6" fill="#404040"></rect><rect x="360" y="576" width="1" height="3" fill="#404040"></rect><rect x="366" y="576" width="1" height="3" fill="#404040"></rect><rect x="373" y="576" width="1" height="3" fill="#404040"></rect><rect x="379" y="576" width="1" height="3" fill="#404040"></rect><rect x="385" y="576" width="1" height="6" fill="#404040"></rect><rect x="391" y="576" width="1" height="3" fill="#404040"></rect><rect x="397" y="576" width="1" height="3" fill="#404040"></rect><rect x="403" y="576" width="1" height="3" fill="#404040"></rect><rect x="409" y="576" width="1" height="3" fill="#404040"></rect><rect x="416" y="576" width="1" height="6" fill="#404040"></rect><rect x="422" y="576" width="1" height="3" fill="#404040"></rect><rect x="428" y="576" width="1" height="3" fill="#404040"></rect><rect x="434" y="576" width="1" height="3" fill="#404040"></rect><rect x="440" y="576" width="1" height="3" fill="#404040"></rect><rect x="446" y="576" width="1" height="6" fill="#404040"></rect><rect x="452" y="576" width="1" height="3" fill="#404040"></rect><rect x="458" y="576" width="1" height="3" fill="#404040"></rect><rect x="465" y="576" width="1" height="3" fill="#404040"></rect><rect x="471" y="576" width="1" height="3" fill="#404040"></rect><rect x="477" y="576" width="1" height="6" fill="#404040"></rect><rect x="483" y="576" width="1" height="3" fill="#404040"></rect><rect x="489" y="576" width="1" height="3" fill="#404040"></rect><rect x="495" y="576" width="1" height="3" fill="#404040"></rect><rect x="501" y="576" width="1" height="3" fill="#404040"></rect><rect x="508" y="576" width="1" height="6" fill="#404040"></rect><rect x="514" y="576" width="1" height="3" fill="#404040"></rect><rect x="520" y="576" width="1" height="3" fill="#404040"></rect><rect x="526" y="576" width="1" height="3" fill="#404040"></rect><rect x="532" y="576" width="1" height="3" fill="#404040"></rect><rect x="538" y="576" width="1" height="6" fill="#404040"></rect><rect x="544" y="576" width="1" height="3" fill="#404040"></rect><rect x="551" y="576" width="1" height="3" fill="#404040"></rect><rect x="557" y="576" width="1" height="3" fill="#404040"></rect><rect x="563" y="576" width="1" height="3" fill="#404040"></rect><rect x="569" y="576" width="1" height="6" fill="#404040"></rect><rect x="575" y="576" width="1" height="3" fill="#404040"></rect><rect x="581" y="576" width="1" height="3" fill="#404040"></rect><rect x="587" y="576" width="1" height="3" fill="#404040"></rect><rect x="594" y="576" width="1" height="3" fill="#404040"></rect><rect x="600" y="576" width="1" height="6" fill="#404040"></rect><rect x="606" y="576" width="1" height="3" fill="#404040"></rect><rect x="612" y="576" width="1" height="3" fill="#404040"></rect><rect x="618" y="576" width="1" height="3" fill="#404040"></rect><rect x="624" y="576" width="1" height="3" fill="#404040"></rect><rect x="630" y="576" width="1" height="6" fill="#404040"></rect><rect x="637" y="576" width="1" height="3" fill="#404040"></rect><rect x="643" y="576" width="1" height="3" fill="#404040"></rect><rect x="649" y="576" width="1" height="3" fill="#404040"></rect><rect x="655" y="576" width="1" height="3" fill="#404040"></rect><rect x="661" y="576" width="1" height="6" fill="#404040"></rect><rect x="667" y="576" width="1" height="3" fill="#404040"></rect><rect x="673" y="576" width="1" height="3" fill="#404040"></rect><rect x="680" y="576" width="1" height="3" fill="#404040"></rect><rect x="686" y="576" width="1" height="3" fill="#404040"></rect><rect x="692" y="576" width="1" height="6" fill="#404040"></rect><rect x="698" y="576" width="1" height="3" fill="#404040"></rect><rect x="704" y="576" width="1" height="3" fill="#404040"></rect><rect x="710" y="576" width="1" height="3" fill="#404040"></rect><rect x="716" y="576" width="1" height="3" fill="#404040"></rect><rect x="722" y="576" width="1" height="6" fill="#404040"></rect><rect x="729" y="576" width="1" height="3" fill="#404040"></rect><rect x="735" y="576" width="1" height="3" fill="#404040"></rect><rect x="741" y="576" width="1" height="3" fill="#404040"></rect><rect x="747" y="576" width="1" height="3" fill="#404040"></rect><rect x="753" y="576" width="1" height="6" fill="#404040"></rect><rect x="759" y="576" width="1" height="3" fill="#404040"></rect><rect x="765" y="576" width="1" height="3" fill="#404040"></rect><rect x="772" y="576" width="1" height="3" fill="#404040"></rect><rect x="778" y="576" width="1" height="3" fill="#404040"></rect><rect x="784" y="576" width="1" height="6" fill="#404040"></rect><rect x="790" y="576" width="1" height="3" fill="#404040"></rect><rect x="796" y="576" width="1" height="3" fill="#404040"></rect><rect x="802" y="576" width="1" height="3" fill="#404040"></rect><rect x="808" y="576" width="1" height="3" fill="#404040"></rect><rect x="815" y="576" width="1" height="6" fill="#404040"></rect><rect x="821" y="576" width="1" height="3" fill="#404040"></rect><rect x="827" y="576" width="1" height="3" fill="#404040"></rect><rect x="833" y="576" width="1" height="3" fill="#404040"></rect><rect x="839" y="576" width="1" height="3" fill="#404040"></rect><rect x="845" y="576" width="1" height="6" fill="#404040"></rect><rect x="851" y="576" width="1" height="3" fill="#404040"></rect><rect x="858" y="576" width="1" height="3" fill="#404040"></rect><rect x="864" y="576" width="1" height="3" fill="#404040"></rect><rect x="870" y="576" width="1" height="3" fill="#404040"></rect><rect x="876" y="576" width="1" height="6" fill="#404040"></rect><rect x="882" y="576" width="1" height="3" fill="#404040"></rect><rect x="888" y="576" width="1" height="3" fill="#404040"></rect><rect x="894" y="576" width="1" height="3" fill="#404040"></rect><rect x="901" y="576" width="1" height="3" fill="#404040"></rect><rect x="907" y="576" width="1" height="6" fill="#404040"></rect><rect x="913" y="576" width="1" height="3" fill="#404040"></rect><rect x="919" y="576" width="1" height="3" fill="#404040"></rect><rect x="925" y="576" width="1" height="3" fill="#404040"></rect><rect x="931" y="576" width="1" height="3" fill="#404040"></rect><rect x="937" y="576" width="1" height="6" fill="#404040"></rect><rect x="944" y="576" width="1" height="3" fill="#404040"></rect><rect x="950" y="576" width="1" height="3" fill="#404040"></rect><rect x="956" y="576" width="1" height="3" fill="#404040"></rect><rect x="962" y="576" width="1" height="3" fill="#404040"></rect><rect x="968" y="576" width="1" height="6" fill="#404040"></rect></svg>
<div class="rl" style="right:755px;top:550px">-32.5</div>
<div class="rl" style="right:755px;top:520px">-30.0</div>
<div class="rl" style="right:755px;top:489px">-27.5</div>
<div class="rl" style="right:755px;top:458px">-25.0</div>
<div class="rl" style="right:755px;top:428px">-22.5</div>
<div class="rl" style="right:755px;top:397px">-20.0</div>
<div class="rl" style="right:755px;top:366px">-17.5</div>
<div class="rl" style="right:755px;top:336px">-15.0</div>
<div class="rl" style="right:755px;top:305px">-12.5</div>
<div class="rl" style="right:755px;top:275px">-10.0</div>
<div class="rl" style="right:755px;top:244px">-7.5</div>
<div class="rl" style="right:755px;top:214px">-5.0</div>
<div class="rl" style="right:755px;top:183px">-2.5</div>
<div class="rl" style="right:755px;top:152px">0.0</div>
<div class="rl" style="right:755px;top:122px">2.5</div>
<div class="a" style="left:226px;top:583px;width:743px;height:11px;overflow:hidden">
<div class="rl" style="left:-25px;width:60px;text-align:center;top:0">-32.5</div>
<div class="rl" style="left:6px;width:60px;text-align:center;top:0">-30.0</div>
<div class="rl" style="left:37px;width:60px;text-align:center;top:0">-27.5</div>
<div class="rl" style="left:67px;width:60px;text-align:center;top:0">-25.0</div>
<div class="rl" style="left:98px;width:60px;text-align:center;top:0">-22.5</div>
<div class="rl" style="left:129px;width:60px;text-align:center;top:0">-20.0</div>
<div class="rl" style="left:160px;width:60px;text-align:center;top:0">-17.5</div>
<div class="rl" style="left:190px;width:60px;text-align:center;top:0">-15.0</div>
<div class="rl" style="left:221px;width:60px;text-align:center;top:0">-12.5</div>
<div class="rl" style="left:252px;width:60px;text-align:center;top:0">-10.0</div>
<div class="rl" style="left:282px;width:60px;text-align:center;top:0">-7.5</div>
<div class="rl" style="left:313px;width:60px;text-align:center;top:0">-5.0</div>
<div class="rl" style="left:344px;width:60px;text-align:center;top:0">-2.5</div>
<div class="rl" style="left:374px;width:60px;text-align:center;top:0">0.0</div>
<div class="rl" style="left:405px;width:60px;text-align:center;top:0">2.5</div>
<div class="rl" style="left:436px;width:60px;text-align:center;top:0">5.0</div>
<div class="rl" style="left:466px;width:60px;text-align:center;top:0">7.5</div>
<div class="rl" style="left:497px;width:60px;text-align:center;top:0">10.0</div>
<div class="rl" style="left:528px;width:60px;text-align:center;top:0">12.5</div>
<div class="rl" style="left:559px;width:60px;text-align:center;top:0">15.0</div>
<div class="rl" style="left:589px;width:60px;text-align:center;top:0">17.5</div>
<div class="rl" style="left:620px;width:60px;text-align:center;top:0">20.0</div>
<div class="rl" style="left:651px;width:60px;text-align:center;top:0">22.5</div>
<div class="rl" style="left:681px;width:60px;text-align:center;top:0">25.0</div>
<div class="rl" style="left:712px;width:60px;text-align:center;top:0">27.5</div>
</div>
<div class="a" style="left:600px;top:184px;width:15px;height:14px;box-sizing:border-box;border:1px solid #103070;background:#fff;color:#102050;font-size:11px;line-height:12px;text-align:center;letter-spacing:-0.3px">11</div>
<div class="a" style="left:600px;top:233px;width:15px;height:14px;box-sizing:border-box;border:1px solid #103070;background:#fff;color:#102050;font-size:11px;line-height:12px;text-align:center;letter-spacing:-0.3px">12</div>
<div class="a" style="left:600px;top:275px;width:15px;height:14px;box-sizing:border-box;border:1px solid #103070;background:#fff;color:#102050;font-size:11px;line-height:12px;text-align:center;letter-spacing:-0.3px">13</div>
<div class="a" style="left:600px;top:307px;width:15px;height:14px;box-sizing:border-box;border:1px solid #103070;background:#fff;color:#102050;font-size:11px;line-height:12px;text-align:center;letter-spacing:-0.3px">14</div>
<div class="a" style="left:600px;top:356px;width:15px;height:14px;box-sizing:border-box;border:1px solid #103070;background:#fff;color:#102050;font-size:11px;line-height:12px;text-align:center;letter-spacing:-0.3px">15</div>
<div class="a" style="left:600px;top:403px;width:15px;height:14px;box-sizing:border-box;border:1px solid #103070;background:#fff;color:#102050;font-size:11px;line-height:12px;text-align:center;letter-spacing:-0.3px">16</div>
<div class="a" style="left:600px;top:471px;width:15px;height:14px;box-sizing:border-box;border:1px solid #103070;background:#fff;color:#102050;font-size:11px;line-height:12px;text-align:center;letter-spacing:-0.3px">17</div>
<div class="a" style="left:600px;top:534px;width:15px;height:14px;box-sizing:border-box;border:1px solid #103070;background:#fff;color:#102050;font-size:11px;line-height:12px;text-align:center;letter-spacing:-0.3px">18</div>
<svg style="left:0;top:0" width="974" height="849" viewBox="0 0 974 849"><rect x="583" y="160" width="14" height="377" fill="#0ac864"></rect><rect x="583" y="200.9" width="13" height="1" fill="#e8fff0"></rect><rect x="583" y="257.0" width="13" height="1" fill="#e8fff0"></rect><rect x="583" y="285.7" width="13" height="1" fill="#e8fff0"></rect><rect x="583" y="317.8" width="13" height="1" fill="#e8fff0"></rect><rect x="583" y="386.9" width="13" height="1" fill="#e8fff0"></rect><rect x="583" y="410.7" width="13" height="1" fill="#e8fff0"></rect><rect x="583" y="523.0" width="13" height="1" fill="#e8fff0"></rect><rect x="596.2" y="159" width="2.7" height="379" fill="#104090"></rect><circle cx="597.4" cy="159.3" r="3.3" fill="#000080"></circle><circle cx="597.4" cy="201.4" r="3.3" fill="#000080"></circle><circle cx="597.4" cy="257.5" r="3.3" fill="#000080"></circle><circle cx="597.4" cy="286.2" r="3.3" fill="#000080"></circle><circle cx="597.4" cy="318.3" r="3.3" fill="#000080"></circle><circle cx="597.4" cy="387.4" r="3.3" fill="#000080"></circle><circle cx="597.4" cy="411.2" r="3.3" fill="#000080"></circle><circle cx="597.4" cy="523.5" r="3.3" fill="#000080"></circle><circle cx="597.4" cy="537.5" r="3.3" fill="#000080"></circle><path d="M598 159.4 H674 M668 156.4 L674 159.4 L668 162.4" stroke="#1a6a1a" stroke-width="1.1" fill="none"></path><path d="M600 159.4 H603 L604 156.6 L605.7 162.6 L607.4 156.6 L609.1 162.6 L610.5 156.6 L611.5 159.4 H614.6 M614.6 151 V167.6 M614.6 153.2 L620 155.6 M614.6 157 L620 159.5 M614.6 161 L620 163.5 M614.6 164.8 L619 166.8" stroke="#801818" stroke-width="1" fill="none"></path><path d="M598.5 160.5 L605.5 167.5 M611.6 173.6 L614 176" stroke="#801818" stroke-width="1" fill="none"></path><circle cx="608.6" cy="170.5" r="4" fill="#fff" stroke="#801818" stroke-width="1"></circle><rect x="607.6" y="169.5" width="2" height="2" fill="none" stroke="#801818" stroke-width="0.9"></rect><path d="M609.2 181.8 L620 171.3 M612.2 179 L614.6 183.4 M615 176.2 L617.8 180.6 M617.8 173.4 L620.6 177.8" stroke="#801818" stroke-width="1" fill="none"></path><path d="M600 537.5 H603 L604 534.7 L605.7 540.5 L607.4 534.7 L609.1 540.5 L610.5 534.7 L611.5 537.5 H614.6 M614.6 529 V544.5 M614.6 531 L620 533.5 M614.6 535 L620 537.5 M614.6 539 L620 541.5 M614.6 542.6 L619 544.6" stroke="#801818" stroke-width="1" fill="none"></path><path d="M597.4 541 V543.5 L600 544.5 L594.4 546.2 L600 548 L594.4 549.8 L600 551 L597.4 552 V554.4 M589 554.4 H606 M593.6 554.4 L591 559.8 M597.6 554.4 L595 559.8 M601.8 554.4 L599.2 559.8" stroke="#801818" stroke-width="1" fill="none"></path></svg>
<div class="t" style="left:589px;top:143px;font-size:11px;color:#0a1a50;letter-spacing:-0.6px">1</div>
<div class="t" style="left:583px;top:185px;font-size:11px;color:#0a1a50;letter-spacing:-0.6px">11</div>
<div class="t" style="left:583px;top:241px;font-size:11px;color:#0a1a50;letter-spacing:-0.6px">12</div>
<div class="t" style="left:583px;top:270px;font-size:11px;color:#0a1a50;letter-spacing:-0.6px">13</div>
<div class="t" style="left:583px;top:302px;font-size:11px;color:#0a1a50;letter-spacing:-0.6px">14</div>
<div class="t" style="left:583px;top:371px;font-size:11px;color:#0a1a50;letter-spacing:-0.6px">15</div>
<div class="t" style="left:583px;top:395px;font-size:11px;color:#0a1a50;letter-spacing:-0.6px">16</div>
<div class="t" style="left:583px;top:507px;font-size:11px;color:#0a1a50;letter-spacing:-0.6px">17</div>
<div class="t" style="left:583px;top:521px;font-size:11px;color:#0a1a50;letter-spacing:-0.6px">18</div>
<div class="t" style="left: 677px; top: 152px; font-size: 11px; color: rgb(26, 106, 26); letter-spacing: -0.49px;">1000.000</div>
<div class="a" style="left:190px;top:595px;width:779px;height:8px;box-sizing:border-box;border:1px solid #a0a0a0;background:#fff"></div>
<div class="a" style="left:207px;top:599px;width:746px;height:1px;background-image:repeating-linear-gradient(90deg,#101060 0 1px,transparent 1px 3px)"></div>
<svg style="left:197px;top:598px" width="6" height="3"><path d="M0 3 H5.4 L2.7 0 Z" fill="#000080"></path></svg>
<svg style="left:956px;top:598px" width="6" height="3"><path d="M0 3 H5.4 L2.7 0 Z" fill="#000080"></path></svg>
<div class="t" style="left: 190px; top: 607px; font-size: 26px; line-height: 28px; height: 28px; letter-spacing: 0.75px; -webkit-text-stroke: 0.35px rgb(0, 0, 0);">面内荷重</div>
<div class="t" style="left: 193px; top: 644px; letter-spacing: 0.55px;">支点:</div>
<div class="sunk" style="left:224px;top:641px;width:66px;height:19px"></div>
<div class="sunk2" style="left:225px;top:642px;width:64px;height:17px;background:#fff"></div>
<div class="t" style="left: 228px; top: 644px; letter-spacing: -0.74px;">Case1</div>
<div class="btn" style="left:273px;top:643px;width:15px;height:15px"></div>
<svg style="left:273px;top:643px" width="15" height="15"><path d="M4 5.5 H11 L7.5 9 Z" fill="#000"></path></svg>
<div class="t" style="left:297px;top:644px">分布<span class="k h" style="letter-spacing: -0.2px;">ﾊﾞﾈ</span>:</div>
<div class="sunk" style="left:346px;top:641px;width:66px;height:19px"></div>
<div class="sunk2" style="left:347px;top:642px;width:64px;height:17px;background:#fff"></div>
<div class="t" style="left: 350px; top: 644px; letter-spacing: -0.74px;">Case1</div>
<div class="btn" style="left:395px;top:643px;width:15px;height:15px"></div>
<svg style="left:395px;top:643px" width="15" height="15"><path d="M4 5.5 H11 L7.5 9 Z" fill="#000"></path></svg>
<div class="a" style="left:419px;top:613px;width:200px;height:48px;box-sizing:border-box;border:1px solid;border-color:#a0a0a0 #fff #fff #a0a0a0"></div>
<div class="t" style="left:418px;top:616px">【荷重合計】</div>
<div class="t" style="left: 428px; top: 630px; letter-spacing: -0.35px;">Σ Px =</div>
<div class="t" style="left: 428px; top: 644px; letter-spacing: -0.35px;">Σ Py =</div>
<div class="a" style="left:189px;top:663px;width:780px;height:1px;background:#a0a0a0"></div>
<div class="a" style="left:189px;top:664px;width:780px;height:1px;background:#fff"></div>
<div class="a" style="left:189px;top:666px;width:780px;height:26px;overflow:hidden">
<svg style="left:15px;top:8px" width="16" height="13" viewBox="0 0 16 13"><path d="M0.5 0.5 H6.5 L9.5 3.5 V10.5 H0.5 Z" fill="#fff" stroke="#000"></path><path d="M6.5 0.5 V3.5 H9.5" fill="none" stroke="#000"></path><path d="M10 1.5 H12 V3.5 H14 V5.5 H12 V7.5 H10 V5.5 H8 V3.5 H10 Z" fill="#00e000" stroke="#003000" stroke-width="0.9"></path></svg>
<div class="t" style="left:34px;top:6px"><span class="k h" style="letter-spacing: 1.25px;">ｹｰｽ</span>追加</div>
<svg style="left:107px;top:8px" width="16" height="13" viewBox="0 0 16 13"><path d="M0.5 3.5 H5.5 V10.5 H0.5 Z" fill="#fff" stroke="#000"></path><path d="M5.5 0.5 H10.5 L13.5 3.5 V9.5 H5.5 Z" fill="#00e000" stroke="#000"></path></svg>
<div class="t" style="left:126px;top:6px"><span class="k h" style="letter-spacing: -0.04px;">ｹｰｽｺﾋﾟｰ</span></div>
<svg style="left:197px;top:8px" width="16" height="13" viewBox="0 0 16 13"><path d="M0.5 0.5 H6.5 L9.5 3.5 V10.5 H0.5 Z" fill="#fff" stroke="#000"></path><path d="M6.5 0.5 V3.5 H9.5" fill="none" stroke="#000"></path><rect x="7.5" y="3.5" width="6" height="3" fill="#00e000" stroke="#003000" stroke-width="0.9"></rect></svg>
<div class="t" style="left:215px;top:6px"><span class="k h" style="letter-spacing: 1.25px;">ｹｰｽ</span>削除</div>
<svg style="left:283px;top:8px" width="16" height="13" viewBox="0 0 16 13"><path d="M0.5 0.5 H6.5 L9.5 3.5 V10.5 H0.5 Z" fill="#fff" stroke="#000"></path><path d="M6.5 0.5 V3.5 H9.5" fill="none" stroke="#000"></path><path d="M7.5 1.5 L13.5 5 L7.5 8.5 Z" fill="#00e000" stroke="#003000" stroke-width="0.9"></path></svg>
<div class="t" style="left:300px;top:6px"><span class="k h" style="letter-spacing: 1.58px;">ｹｰｽ</span>番号変更</div>
<svg style="left:389px;top:8px" width="16" height="13" viewBox="0 0 16 13"><path d="M0.5 0.5 H6.5 L9.5 3.5 V10.5 H0.5 Z" fill="none" stroke="#000" stroke-dasharray="2 1.4"></path><rect x="7.5" y="3.5" width="6" height="3" fill="#00e000" stroke="#003000" stroke-width="0.9"></rect></svg>
<div class="t" style="left:407px;top:6px"><span class="k h" style="letter-spacing: 0.92px;">ｹｰｽ</span>欠番削除</div>
<svg style="left:497px;top:8px" width="16" height="13" viewBox="0 0 16 13"><path d="M0.5 0.5 H6.5 V10.5 H0.5 Z" fill="#fff" stroke="#000"></path><path d="M5.5 1.5 H11.5 L14.5 4.5 V10.5 H5.5 Z" fill="#fff" stroke="#000"></path><path d="M8.5 3 H10.5 V5 H12.5 V7 H10.5 V9 H8.5 V7 H6.5 V5 H8.5 Z" fill="#00e000" stroke="#003000" stroke-width="0.9"></path></svg>
<div class="t" style="left:515px;top:6px">合成荷重<span class="k h" style="letter-spacing: 0.92px;">ｹｰｽ</span></div>
<svg style="left:603px;top:8px" width="16" height="13" viewBox="0 0 16 13"><rect x="0.5" y="0.5" width="13" height="7" fill="#707070" stroke="#202020"></rect><path d="M0 8 H14 V9.5 L8.5 11 L7 12.5 L5.5 11 L0 9.5 Z" fill="#00e000"></path><path d="M5 11 L7 13 L9 11Z" fill="#000"></path></svg>
<div class="t" style="left: 622px; top: 6px; letter-spacing: -0.17px;">荷重<span class="k h" style="letter-spacing: -0.32px;">ｼﾞｪﾈﾚｰﾄ</span></div>
<svg style="left:712px;top:8px" width="16" height="13" viewBox="0 0 16 13"><path d="M0.5 3.5 H5.5 V10.5 H0.5 Z" fill="#fff" stroke="#000"></path><path d="M5.5 0.5 H10.5 L13.5 3.5 V9.5 H5.5 Z" fill="#00e000" stroke="#000"></path></svg>
<div class="t" style="left:730px;top:6px">反転荷重ｹｰｽ</div>
</div>
<div class="t" style="left:194px;top:697px"><span class="k h" style="letter-spacing: 1.14px;">ｹｰｽ</span>番号:</div>
<div class="btn" style="left:251px;top:695px;width:17px;height:18px"></div>
<svg style="left:251px;top:695px" width="17" height="18"><path d="M11 4.5 V13.5 L5 9 Z" fill="#a0a0a0"></path><path d="M12 5.5 V14.5 L6 10 Z" fill="#fff" opacity=".0"></path></svg>
<div class="sunk" style="left:268px;top:694px;width:50px;height:20px"></div>
<div class="sunk2" style="left:269px;top:695px;width:48px;height:18px;background:#fff"></div>
<div class="t" style="left:272px;top:697px">2</div>
<div class="btn" style="left:319px;top:695px;width:17px;height:18px"></div>
<svg style="left:319px;top:695px" width="17" height="18"><path d="M5.5 4.5 V13.5 L12 9 Z" fill="#000"></path></svg>
<div class="t" style="left:342px;top:697px"><span class="k h" style="letter-spacing: -0.34px;">ﾀｲﾄﾙ</span>:</div>
<div class="sunk" style="left:374px;top:694px;width:538px;height:20px"></div>
<div class="sunk2" style="left:375px;top:695px;width:536px;height:18px;background:#fff"></div>
<div class="t" style="left: 378px; top: 697px; letter-spacing: -0.17px;">K1, K3 (水平反力＝K1, 回転反力＝K3)</div>
<div class="btn" style="left:914px;top:695px;width:17px;height:18px"></div>
<div class="a" style="left:919px;top:700px;width:9px;height:9px;background:#000"></div>
<div class="btn" style="left:932px;top:695px;width:17px;height:18px"></div>
<svg style="left:932px;top:695px" width="17" height="18"><path d="M4.7 5.2 H14.4 L9.5 14.2 Z" fill="#000"></path></svg>
<div class="a" style="left:950px;top:695px;width:17px;height:18px;box-sizing:border-box;background:#f8f8f8;border:1px solid;border-color:#696969 #fff #fff #696969;box-shadow:inset 1px 1px 0 #a0a0a0"></div>
<svg style="left:950px;top:695px" width="17" height="18"><path d="M5.8 6 V15 L15.8 10.5 Z" fill="#000"></path></svg>
<div class="sunk" style="left:189px;top:714px;width:780px;height:111px"></div>
<div class="sunk2" style="left:190px;top:715px;width:778px;height:109px;background:#fff"></div>
<div class="gh" style="left:191px;top:716px;width:61px;height:37px"></div>
<div class="a" style="left:160.5px;top:727px;width:120px;height:14px;text-align:center;white-space:nowrap;line-height:14px"><span class="t" style="position:static;display:inline-block">番号</span></div>
<div class="gh" style="left:252px;top:716px;width:61px;height:37px"></div>
<div class="a" style="left:221.5px;top:727px;width:120px;height:14px;text-align:center;white-space:nowrap;line-height:14px"><span class="t" style="position: static; display: inline-block; letter-spacing: -0.38px;">荷重<span class="k h" style="letter-spacing: -0.75px;">ｺｰﾄﾞ</span></span></div>
<div class="gh" style="left:313px;top:716px;width:61px;height:37px"></div>
<div class="a" style="left:282.5px;top:727px;width:120px;height:14px;text-align:center;white-space:nowrap;line-height:14px"><span class="t" style="position:static;display:inline-block">格点</span></div>
<div class="gh" style="left:374px;top:716px;width:61px;height:37px"></div>
<div class="gh" style="left:435px;top:716px;width:107px;height:37px"></div>
<div class="a" style="left:427.5px;top:719px;width:120px;height:14px;text-align:center;white-space:nowrap;line-height:14px"><span class="t" style="position: static; display: inline-block; letter-spacing: -0.34px;">X方向</span></div>
<div class="a" style="left:427.5px;top:734px;width:120px;height:14px;text-align:center;white-space:nowrap;line-height:14px"><span class="t" style="position: static; display: inline-block; letter-spacing: -0.04px;">強制変位 (mm)</span></div>
<div class="gh" style="left:542px;top:716px;width:107px;height:37px"></div>
<div class="a" style="left:534.5px;top:719px;width:120px;height:14px;text-align:center;white-space:nowrap;line-height:14px"><span class="t" style="position: static; display: inline-block; letter-spacing: -0.34px;">Y方向</span></div>
<div class="a" style="left:534.5px;top:734px;width:120px;height:14px;text-align:center;white-space:nowrap;line-height:14px"><span class="t" style="position: static; display: inline-block; letter-spacing: -0.04px;">強制変位 (mm)</span></div>
<div class="gh" style="left:649px;top:716px;width:107px;height:37px"></div>
<div class="a" style="left:641.5px;top:719px;width:120px;height:14px;text-align:center;white-space:nowrap;line-height:14px"><span class="t" style="position:static;display:inline-block">回転</span></div>
<div class="a" style="left:641.5px;top:734px;width:120px;height:14px;text-align:center;white-space:nowrap;line-height:14px"><span class="t" style="position: static; display: inline-block; letter-spacing: -0.15px;">強制変位 (mrad)</span></div>
<div class="gh" style="left:756px;top:716px;width:107px;height:37px"></div>
<div class="gh" style="left:191px;top:753px;width:61px;height:19px;text-align:right;padding-right:12px;line-height:17px">1</div>
<div class="gc" style="left:252px;top:753px;width:61px;height:19px;background:#0078d7;color:#fff">61</div>
<div class="gc" style="left:313px;top:753px;width:61px;height:19px">1</div>
<div class="gc" style="left:374px;top:753px;width:61px;height:19px">0</div>
<div class="gc" style="left:435px;top:753px;width:107px;height:19px">1000.000</div>
<div class="gc" style="left:542px;top:753px;width:107px;height:19px">0.000</div>
<div class="gc" style="left:649px;top:753px;width:107px;height:19px">0.000</div>
<div class="gc" style="left:756px;top:753px;width:107px;height:19px">0.000</div>
<div class="gh" style="left:191px;top:772px;width:61px;height:19px;text-align:right;padding-right:12px;line-height:17px"></div>
<div class="gc" style="left:252px;top:772px;width:61px;height:19px"></div>
<div class="gc" style="left:313px;top:772px;width:61px;height:19px"></div>
<div class="gc" style="left:374px;top:772px;width:61px;height:19px"></div>
<div class="gc" style="left:435px;top:772px;width:107px;height:19px"></div>
<div class="gc" style="left:542px;top:772px;width:107px;height:19px"></div>
<div class="gc" style="left:649px;top:772px;width:107px;height:19px"></div>
<div class="gc" style="left:756px;top:772px;width:107px;height:19px"></div>
<div class="a" style="left:1px;top:828px;width:184px;height:1px;background:#b4b4b4"></div>
<div class="a" style="left:185px;top:826px;width:786px;height:1px;background:#c8c8c8"></div>
<div class="a" style="left:185px;top:827px;width:786px;height:2px;background:#808080"></div>
<div class="a" style="left:1px;top:829px;width:971px;height:19px;background:#f0f0f0"></div>
<div class="a" style="left:1px;top:829px;width:971px;height:1px;background:#fafafa"></div>
<div class="a" style="left:2px;top:831px;width:79px;height:17px;box-sizing:border-box;border:1px solid;border-color:#a0a0a0 #fff #fff #a0a0a0"></div>
<div class="a" style="left:83px;top:831px;width:69px;height:17px;box-sizing:border-box;border:1px solid;border-color:#a0a0a0 #fff #fff #a0a0a0"></div>
<div class="a" style="left:154px;top:831px;width:652px;height:17px;box-sizing:border-box;border:1px solid;border-color:#a0a0a0 #fff #fff #a0a0a0"></div>
<div class="a" style="left:808px;top:831px;width:36px;height:17px;box-sizing:border-box;border:1px solid;border-color:#a0a0a0 #fff #fff #a0a0a0"></div>
<div class="a" style="left:846px;top:831px;width:37px;height:17px;box-sizing:border-box;border:1px solid;border-color:#a0a0a0 #fff #fff #a0a0a0"></div>
<div class="a" style="left:885px;top:831px;width:88px;height:17px;box-sizing:border-box;border:1px solid;border-color:#a0a0a0 #fff #fff #a0a0a0"></div>
<div class="t" style="left: 19px; top: 833px; letter-spacing: 0.5px;">S I 単位</div>
<div class="t" style="left: 811px; top: 833px; color: rgb(160, 160, 160); letter-spacing: -1.42px;">CAPS</div>
<div class="t" style="left: 850px; top: 833px; letter-spacing: -0.11px;">NUM</div>
<div class="t" style="left: 887px; top: 833px; letter-spacing: -0.71px;">13:46:19</div>
<svg style="left:960px;top:835px" width="13" height="13"><path d="M12.5 1.5 L1.5 12.5 M12.5 5.5 L5.5 12.5 M12.5 9.5 L9.5 12.5" stroke="#a8a8a8" stroke-width="1.2"></path></svg>
<div class="a" style="left:0;top:31px;width:1px;height:818px;background:#1883d7"></div>
<div class="a" style="left:973px;top:31px;width:1px;height:53px;background:#2b7fd3"></div>
<div class="a" style="left:971px;top:84px;width:3px;height:745px;background:#4079a8;box-shadow:-1px 0 0 rgba(64,121,168,.15)"></div>
<div class="a" style="left:972px;top:829px;width:1px;height:20px;background:#c4e2f6"></div>
<div class="a" style="left:973px;top:829px;width:1px;height:20px;background:#1883d7"></div>
<div class="a" style="left:0;top:847px;width:974px;height:1px;background:#8cc0ec"></div>
<div class="a" style="left:0;top:848px;width:974px;height:1px;background:#1883d7"></div>
</body></html>
